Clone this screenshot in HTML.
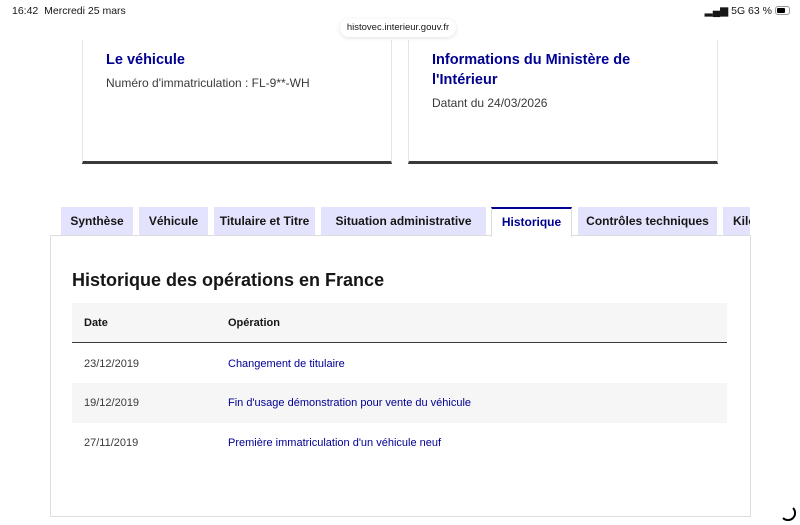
<!DOCTYPE html>
<html><head><meta charset="utf-8"><style>
*{margin:0;padding:0;box-sizing:border-box}
body{width:800px;height:525px;background:#fff;font-family:"Liberation Sans",sans-serif;position:relative;overflow:hidden;color:#161616}
.abs{position:absolute}
.card{position:absolute;top:40px;height:124px;border-left:1px solid #e5e5e5;border-right:1px solid #e5e5e5;border-bottom:3px solid #3a3a3a}
.card h2{font-size:14.5px;color:#000091;font-weight:bold;line-height:20px}
.card p{font-size:12px;color:#3a3a3a;margin-top:6px}
.tab{position:absolute;top:207px;height:28px;background:#e3e3fd;font-size:12px;font-weight:bold;line-height:28px;text-align:center;color:#161616}
.row{position:absolute;left:72px;width:655px;height:40px;font-size:11px;line-height:40px}
.row span{position:absolute}
</style></head><body>
<div class="abs" style="left:12px;top:5px;font-size:10.5px">16:42&nbsp;&nbsp;Mercredi 25 mars</div>
<div class="abs" style="right:28px;top:5px;font-size:10.5px">▂▄▆ 5G 63 %</div>
<div class="abs" style="right:10px;top:6px;width:15px;height:9px;border:1px solid #999;border-radius:3px"><div style="width:8px;height:5px;background:#000;margin:1px;border-radius:1px"></div></div>
<div class="abs" style="left:340px;top:19px;width:116px;height:18px;border-radius:9px;background:#fff;box-shadow:0 1px 4px rgba(0,0,0,.12);font-size:9.5px;line-height:18px;text-align:center">histovec.interieur.gouv.fr</div>
<div class="card" style="left:82px;width:310px;padding:10px 0 0 23px"><h2>Le véhicule</h2><p>Numéro d'immatriculation : FL-9**-WH</p></div>
<div class="card" style="left:408px;width:310px;padding:10px 0 0 23px"><h2>Informations du Ministère de<br>l'Intérieur</h2><p>Datant du 24/03/2026</p></div>
<div class="abs" style="left:50px;top:235px;width:701px;height:282px;border:1px solid #ddd"></div>
<div class="tab" style="left:61px;width:72px">Synthèse</div>
<div class="tab" style="left:139px;width:69px">Véhicule</div>
<div class="tab" style="left:214px;width:101px">Titulaire et Titre</div>
<div class="tab" style="left:321px;width:165px">Situation administrative</div>
<div class="tab" style="left:491px;width:81px;background:#fff;color:#000091;border-top:2px solid #000091;border-left:1px solid #ddd;border-right:1px solid #ddd;height:30px;line-height:27px">Historique</div>
<div class="tab" style="left:578px;width:139px">Contrôles techniques</div>
<div class="tab" style="left:723px;width:27px;text-align:left;padding-left:10px;overflow:hidden">Kilo</div>
<div class="abs" style="left:72px;top:270px;font-size:18px;font-weight:bold">Historique des opérations en France</div>
<div class="row" style="top:303px;background:#f6f6f6;border-bottom:1px solid #3a3a3a;font-weight:bold"><span style="left:12px">Date</span><span style="left:156px">Opération</span></div>
<div class="row" style="top:344px;color:#3a3a3a"><span style="left:12px">23/12/2019</span><span style="left:156px;color:#000091">Changement de titulaire</span></div>
<div class="row" style="top:383px;background:#f6f6f6;color:#3a3a3a"><span style="left:12px">19/12/2019</span><span style="left:156px;color:#000091">Fin d'usage démonstration pour vente du véhicule</span></div>
<div class="row" style="top:423px;color:#3a3a3a"><span style="left:12px">27/11/2019</span><span style="left:156px;color:#000091">Première immatriculation d'un véhicule neuf</span></div>
<svg class="abs" style="left:780px;top:505px" width="16" height="16"><path d="M13 3 A7 7 0 0 1 3 13" fill="none" stroke="#000" stroke-width="2"/></svg>
</body></html>
